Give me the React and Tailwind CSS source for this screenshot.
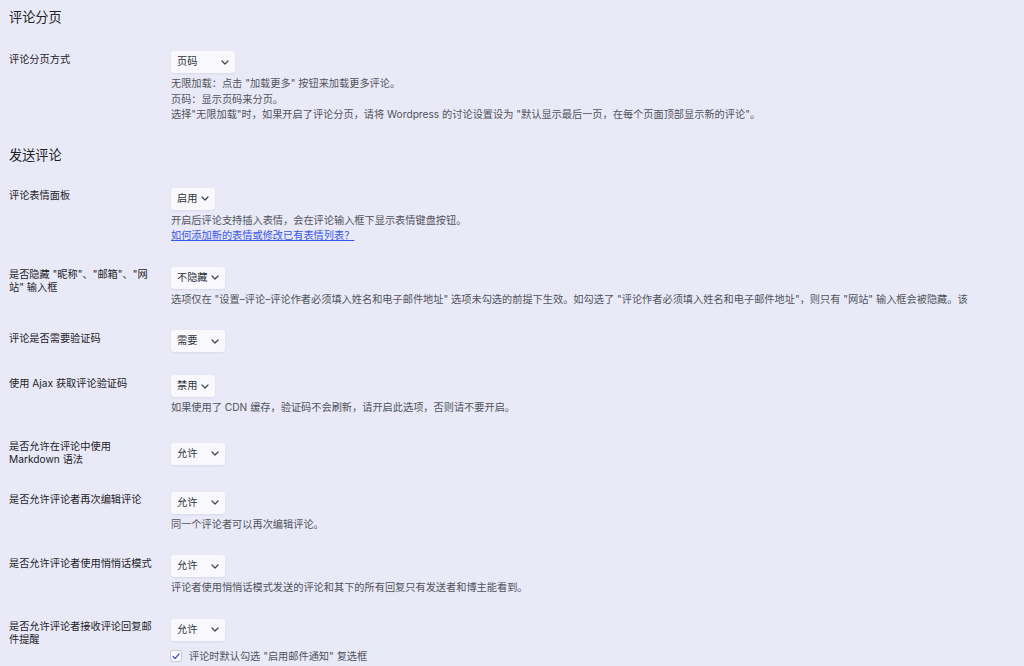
import React from "react";

const Chevron = () => (
  <svg width="8" height="5" viewBox="0 0 8 5" fill="none" className="shrink-0">
    <path d="M1 1l3 3 3-3" stroke="#3c434a" strokeWidth="1.2" strokeLinecap="round" strokeLinejoin="round" />
  </svg>
);

const Select = ({ value, w }) => (
  <div
    className={`inline-flex h-[22px] items-center justify-between rounded-[3px] bg-[#f8f8fd] pl-[6px] pr-[6px] text-[10.2px] text-[#2c3338] shadow-[0_1px_2px_rgba(30,30,80,0.08)] ${w}`}
  >
    <span>{value}</span>
    <Chevron />
  </div>
);

const Row = ({ label, children }) => (
  <div className="flex">
    <div className="w-[162px] shrink-0 self-start pb-[12px] pr-[14px] pt-[14.5px] text-[10.2px] leading-[13.3px] text-[#1d2327]">
      {label}
    </div>
    <div className="flex min-w-0 flex-1 flex-col items-start self-center pb-[10px] pt-[13px]">
      {children}
    </div>
  </div>
);

const Desc = ({ children }) => (
  <div className="mt-[3px] whitespace-nowrap text-[10.2px] leading-[15.5px] text-[#50545b]">
    {children}
  </div>
);

const H2 = ({ children, className }) => (
  <h2 className={`text-[13.2px] font-normal leading-[18px] text-[#1d2327] ${className}`}>{children}</h2>
);

export default function App() {
  return (
    <div
      className="min-h-[666px] w-full overflow-hidden bg-[#e9e9f8] pl-[9px] pr-[40px] pt-[8px]"
      style={{ fontFamily: 'Inter, "Noto Sans CJK SC", sans-serif' }}
    >
      <H2 className="mb-[12px]">评论分页</H2>
      <Row label="评论分页方式">
        <Select value="页码" w="w-[64px]" />
        <Desc>
          <div>无限加载：点击 "加载更多" 按钮来加载更多评论。</div>
          <div>页码：显示页码来分页。</div>
          <div>选择"无限加载"时，如果开启了评论分页，请将 Wordpress 的讨论设置设为 "默认显示最后一页，在每个页面顶部显示新的评论"。</div>
        </Desc>
      </Row>

      <H2 className="mb-[11px] mt-[13px]">发送评论</H2>
      <Row label="评论表情面板">
        <Select value="启用" w="w-[44px]" />
        <Desc>
          <div>开启后评论支持插入表情，会在评论输入框下显示表情键盘按钮。</div>
          <a href="#" className="text-[#3858e9] underline">如何添加新的表情或修改已有表情列表？</a>
        </Desc>
      </Row>
      <Row label='是否隐藏 "昵称"、"邮箱"、"网站" 输入框'>
        <Select value="不隐藏" w="w-[54px]" />
        <Desc>
          <div>选项仅在 "设置–评论–评论作者必须填入姓名和电子邮件地址" 选项未勾选的前提下生效。如勾选了 "评论作者必须填入姓名和电子邮件地址"，则只有 "网站" 输入框会被隐藏。该</div>
        </Desc>
      </Row>
      <Row label="评论是否需要验证码">
        <Select value="需要" w="w-[54px]" />
      </Row>
      <Row label="使用 Ajax 获取评论验证码">
        <Select value="禁用" w="w-[44px]" />
        <Desc>
          <div>如果使用了 CDN 缓存，验证码不会刷新，请开启此选项，否则请不要开启。</div>
        </Desc>
      </Row>
      <Row label="是否允许在评论中使用 Markdown 语法">
        <Select value="允许" w="w-[54px]" />
      </Row>
      <Row label="是否允许评论者再次编辑评论">
        <Select value="允许" w="w-[54px]" />
        <Desc>
          <div>同一个评论者可以再次编辑评论。</div>
        </Desc>
      </Row>
      <Row label="是否允许评论者使用悄悄话模式">
        <Select value="允许" w="w-[54px]" />
        <Desc>
          <div>评论者使用悄悄话模式发送的评论和其下的所有回复只有发送者和博主能看到。</div>
        </Desc>
      </Row>
      <Row label="是否允许评论者接收评论回复邮件提醒">
        <Select value="允许" w="w-[54px]" />
        <div className="mt-[8px] flex items-center gap-[8px] text-[10.2px] leading-[15.5px] text-[#50545b]">
          <span className="flex h-[10px] w-[10px] items-center justify-center rounded-[2px] bg-white shadow-[0_0_0_1px_rgba(140,143,148,0.35)]">
            <svg width="8" height="7" viewBox="0 0 8 7" fill="none">
              <path d="M1 3.6l2 2L7 1" stroke="#4a57d6" strokeWidth="1.4" strokeLinecap="round" strokeLinejoin="round" />
            </svg>
          </span>
          <span>评论时默认勾选 "启用邮件通知" 复选框</span>
        </div>
      </Row>
    </div>
  );
}
